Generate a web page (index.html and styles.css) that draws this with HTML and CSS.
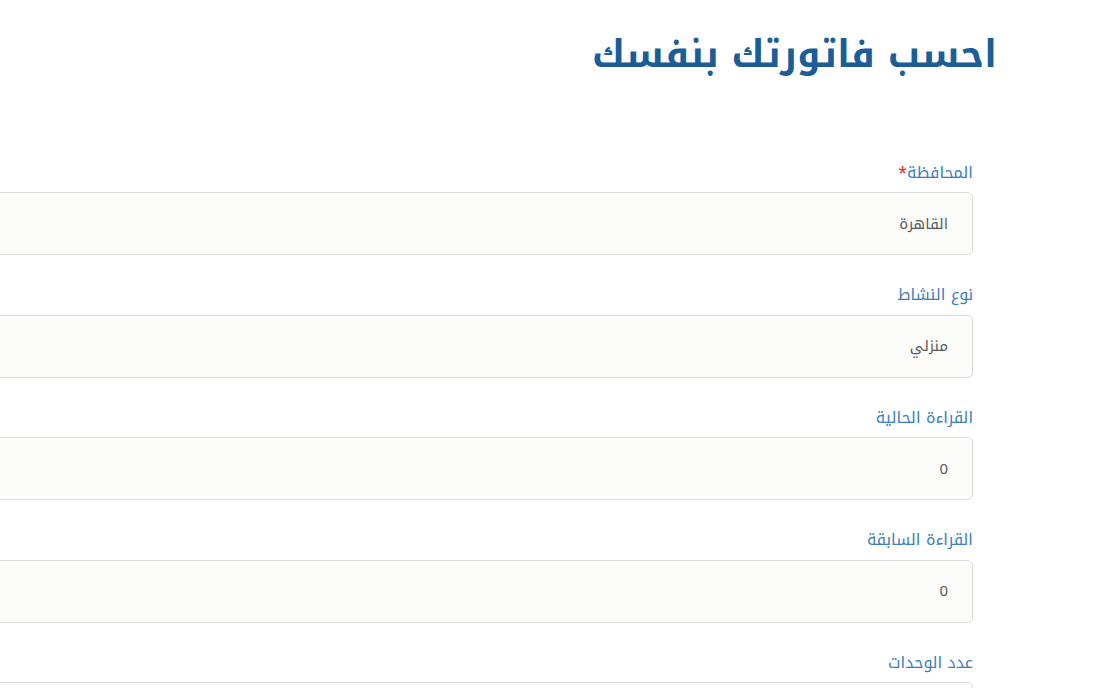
FILE: index.html
```html
<!DOCTYPE html>
<html lang="ar" dir="rtl">
<head>
<meta charset="utf-8">
<title>احسب فاتورتك بنفسك</title>
<link rel="stylesheet" href="styles.css">
</head>
<body>
<div class="page">
  <h1 class="title">احسب فاتورتك بنفسك</h1>
  <form class="calc">
    <div class="field">
      <label class="label">المحافظة<span class="req">*</span></label>
      <div class="input">القاهرة</div>
    </div>
    <div class="field">
      <label class="label">نوع النشاط</label>
      <div class="input">منزلي</div>
    </div>
    <div class="field">
      <label class="label">القراءة الحالية</label>
      <div class="input">0</div>
    </div>
    <div class="field">
      <label class="label">القراءة السابقة</label>
      <div class="input">0</div>
    </div>
    <div class="field">
      <label class="label">عدد الوحدات</label>
      <div class="input">1</div>
    </div>
  </form>
</div>
</body>
</html>
```
FILE: styles.css
```css
html, body {
  margin: 0;
  padding: 0;
  background: #ffffff;
  overflow: hidden;
}
body {
  font-family: "Noto Kufi Arabic", "Noto Sans Arabic", "Noto Sans", "DejaVu Sans", sans-serif;
  direction: rtl;
}
.page {
  padding-right: 115px;
  padding-top: 30px;
}
.title {
  margin: 0;
  font-size: 37.5px;
  font-weight: 700;
  color: #1b5d97;
  line-height: 50px;
}
.calc {
  margin-top: 79.5px;
  margin-right: 24px;
  margin-left: -40px;
  display: flex;
  flex-direction: column;
  gap: 27px;
}
.field {
  display: flex;
  flex-direction: column;
  gap: 7.5px;
}
.label {
  font-size: 16px;
  line-height: 25px;
  color: #3b7dbd;
}
.req {
  color: #e0261b;
}
.input {
  height: 63px;
  box-sizing: border-box;
  border: 1px solid #dcdcdc;
  border-radius: 5px;
  background: #fcfdfa;
  padding: 0 24px;
  display: flex;
  align-items: center;
  font-size: 15px;
  color: #5a5a5a;
}
```
